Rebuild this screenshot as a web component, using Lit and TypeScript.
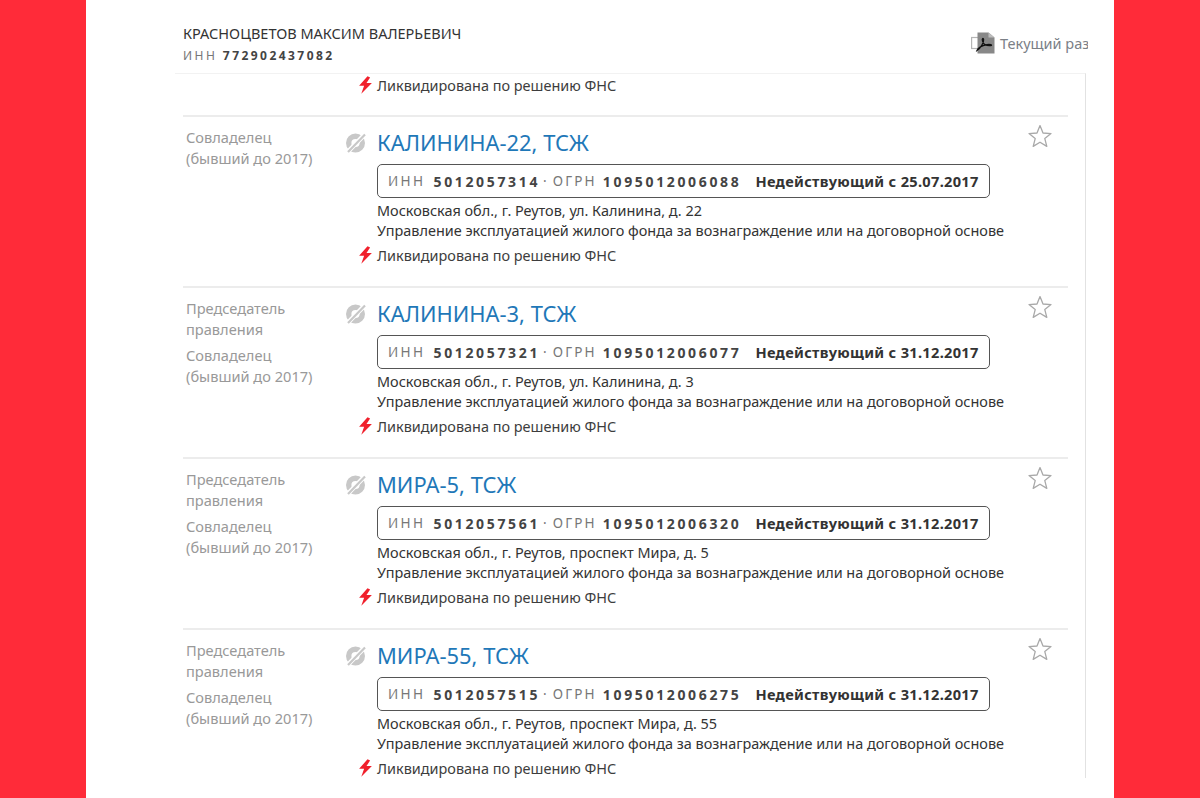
import { LitElement, html, css, svg } from "lit";
import { customElement } from "lit/decorators.js";

interface Row { roles: string[]; name: string; inn: string; ogrn: string; date: string; addr: string; }
const ACT = "Управление эксплуатацией жилого фонда за вознаграждение или на договорной основе";
const ROWS: Row[] = [
  { roles: [], name: "КАЛИНИНА-22, ТСЖ", inn: "5012057314", ogrn: "1095012006088", date: "25.07.2017", addr: "Московская обл., г. Реутов, ул. Калинина, д. 22" },
  { roles: ["Председатель<br>правления"], name: "КАЛИНИНА-3, ТСЖ", inn: "5012057321", ogrn: "1095012006077", date: "31.12.2017", addr: "Московская обл., г. Реутов, ул. Калинина, д. 3" },
  { roles: ["Председатель<br>правления"], name: "МИРА-5, ТСЖ", inn: "5012057561", ogrn: "1095012006320", date: "31.12.2017", addr: "Московская обл., г. Реутов, проспект Мира, д. 5" },
  { roles: ["Председатель<br>правления"], name: "МИРА-55, ТСЖ", inn: "5012057515", ogrn: "1095012006275", date: "31.12.2017", addr: "Московская обл., г. Реутов, проспект Мира, д. 55" },
];

const bolt = svg`<svg class="bolt" viewBox="0 0 14 18"><path d="M9 0.3 L0.6 9.8 L5.6 9.8 L2.8 17.7 L13.4 6.9 L8 6.9 L11.6 1.6 Z" fill="#f0202c"/></svg>`;
const star = svg`<svg class="star" viewBox="0 0 24 24" width="24" height="24"><path d="M12 1.6 L15 9 L23 9.6 L16.8 14.6 L18.8 22.4 L12 18.2 L5.2 22.4 L7.2 14.6 L1 9.6 L9 9 Z" fill="none" stroke="#a9a9a9" stroke-width="1.3" stroke-linejoin="round"/></svg>`;
const dead = svg`<svg class="dead" viewBox="0 0 22 22" width="22" height="22"><circle cx="10.5" cy="11" r="6.8" fill="none" stroke="#c8c8c8" stroke-width="5.4"/><path d="M2.6 20 L20 2.2" stroke="#fff" stroke-width="4.6"/><path d="M3 20 L20 2.4" stroke="#c8c8c8" stroke-width="2.2"/></svg>`;
const pdf = svg`<svg class="pdf" viewBox="0 0 24 22" width="24" height="22"><rect x="0.6" y="5.5" width="10" height="11" fill="#fff" stroke="#b5b5b5" stroke-width="1.2"/><path d="M6.5 0.5 H17.5 L23.5 5.5 V21.5 H6.5 Z" fill="#888"/><path d="M17.5 0.5 V5.5 H23.5" fill="#bdbdbd"/><path d="M6 18.5 C10 16 13 10 12.6 7.4 C12.2 5.6 10.6 6.4 11.6 9.4 C12.6 12.4 16 14 20 13.6 C21.6 13.2 19.4 12 16 12.6 C12 13.4 7 15.6 6 18.5 Z" fill="none" stroke="#111" stroke-width="1.3"/></svg>`;

@customElement("app-root")
export class AppRoot extends LitElement {
  static styles = css`
    :host { display: block; height: 798px; overflow: hidden; background: #ff2b39; font-family: "Noto Sans", "Open Sans", sans-serif; }
    .panel { width: 1028px; height: 798px; margin-left: 86px; background: #fff; box-sizing: border-box; padding-left: 89px; overflow: hidden; }
    .head { width: 913px; height: 73px; box-sizing: border-box; padding: 24px 0 0 8px; display: flex; justify-content: space-between; overflow: hidden; }
    .who { color: #333; font-size: 14.5px; line-height: 18px; }
    .who .inn { margin-top: 6px; font-size: 12px; letter-spacing: 2.45px; color: #777; line-height: 16px; }
    .who .inn b { color: #444; font-weight: 700; }
    .report { display: flex; align-items: center; gap: 5px; height: 36px; margin-top: 1px; font-size: 14.5px; color: #7b8087; width: 117px; white-space: nowrap; overflow: hidden; flex: none; }
    .pdf { flex: none; margin-top: -1px; }
    .list { width: 911px; height: 705px; box-sizing: border-box; border-right: 1px solid #e2e2e2; border-top: 1px solid #f2f2f2; padding: 0 17px 0 8px; }
    .reason { display: flex; align-items: center; height: 20px; font-size: 14.45px; color: #3d3d3d; margin-left: -19px; gap: 4px; }
    .bolt { width: 15px; height: 18px; flex: none; margin-top: -1px; }
    .first { height: 43px; padding: 1px 0 0 194px; box-sizing: border-box; border-bottom: 2px solid #ececec; }
    .row { display: grid; grid-template-columns: 194px 1fr 44px; height: 171px; box-sizing: border-box; border-bottom: 2px solid #ececec; }
    .row:first-of-type { height: 172px; }
    .row:last-child { border-bottom: 0; }
    .roles { padding: 10px 0 0 3px; color: #999; font-size: 14.6px; line-height: 20.5px; position: relative; }
    .roles p { margin: 0 0 6px; }
    .dead { position: absolute; left: 162px; top: 15px; }
    .main { min-width: 0; padding-top: 8px; }
    .name { color: #1f78b8; font-size: 21.9px; line-height: 36px; height: 36px; }
    .box { width: 613px; height: 34px; margin-top: 3px; box-sizing: border-box; border: 1px solid #555; border-radius: 5px; display: flex; align-items: center; padding-left: 10px; font-size: 13.5px; color: #777; letter-spacing: 2.4px; white-space: nowrap; }
    .box b { color: #444; font-weight: 700; font-size: 14px; letter-spacing: 2.65px; }
    .box .l1 { margin-right: 8px; }
    .box .l2 { margin-right: 6px; letter-spacing: 2.2px; }
    .box .dot { margin: 0 6px 0 3px; letter-spacing: 0; }
    .box .st { margin-left: 14px; color: #333; font-weight: 700; letter-spacing: 0.3px; font-size: 14.6px; }
    .info { margin-top: 3px; font-size: 14.45px; line-height: 20.25px; color: #333; white-space: nowrap; }
    .main .reason { margin-top: 4px; }
    .fav { padding: 7px 0 0 4px; }
    .star { display: block; }
  `;

  render() {
    return html`<div class="panel">
      <div class="head">
        <div class="who">КРАСНОЦВЕТОВ МАКСИМ ВАЛЕРЬЕВИЧ
          <div class="inn">ИНН <b>772902437082</b></div>
        </div>
        <div class="report">${pdf}<span>Текущий раздел</span></div>
      </div>
      <div class="list">
        <div class="first"><div class="reason">${bolt}Ликвидирована по решению ФНС</div></div>
        ${ROWS.map((r) => html`<div class="row">
          <div class="roles">
            ${r.roles.length ? html`<p>Председатель<br />правления</p>` : ""}
            <p>Совладелец<br />(бывший до 2017)</p>
            ${dead}
          </div>
          <div class="main">
            <div class="name">${r.name}</div>
            <div class="box"><span class="l1">ИНН</span><b>${r.inn}</b><span class="dot">·</span><span class="l2">ОГРН</span><b>${r.ogrn}</b><span class="st">Недействующий с ${r.date}</span></div>
            <div class="info">${r.addr}<br />${ACT}</div>
            <div class="reason">${bolt}Ликвидирована по решению ФНС</div>
          </div>
          <div class="fav">${star}</div>
        </div>`)}
      </div>
    </div>`;
  }
}
